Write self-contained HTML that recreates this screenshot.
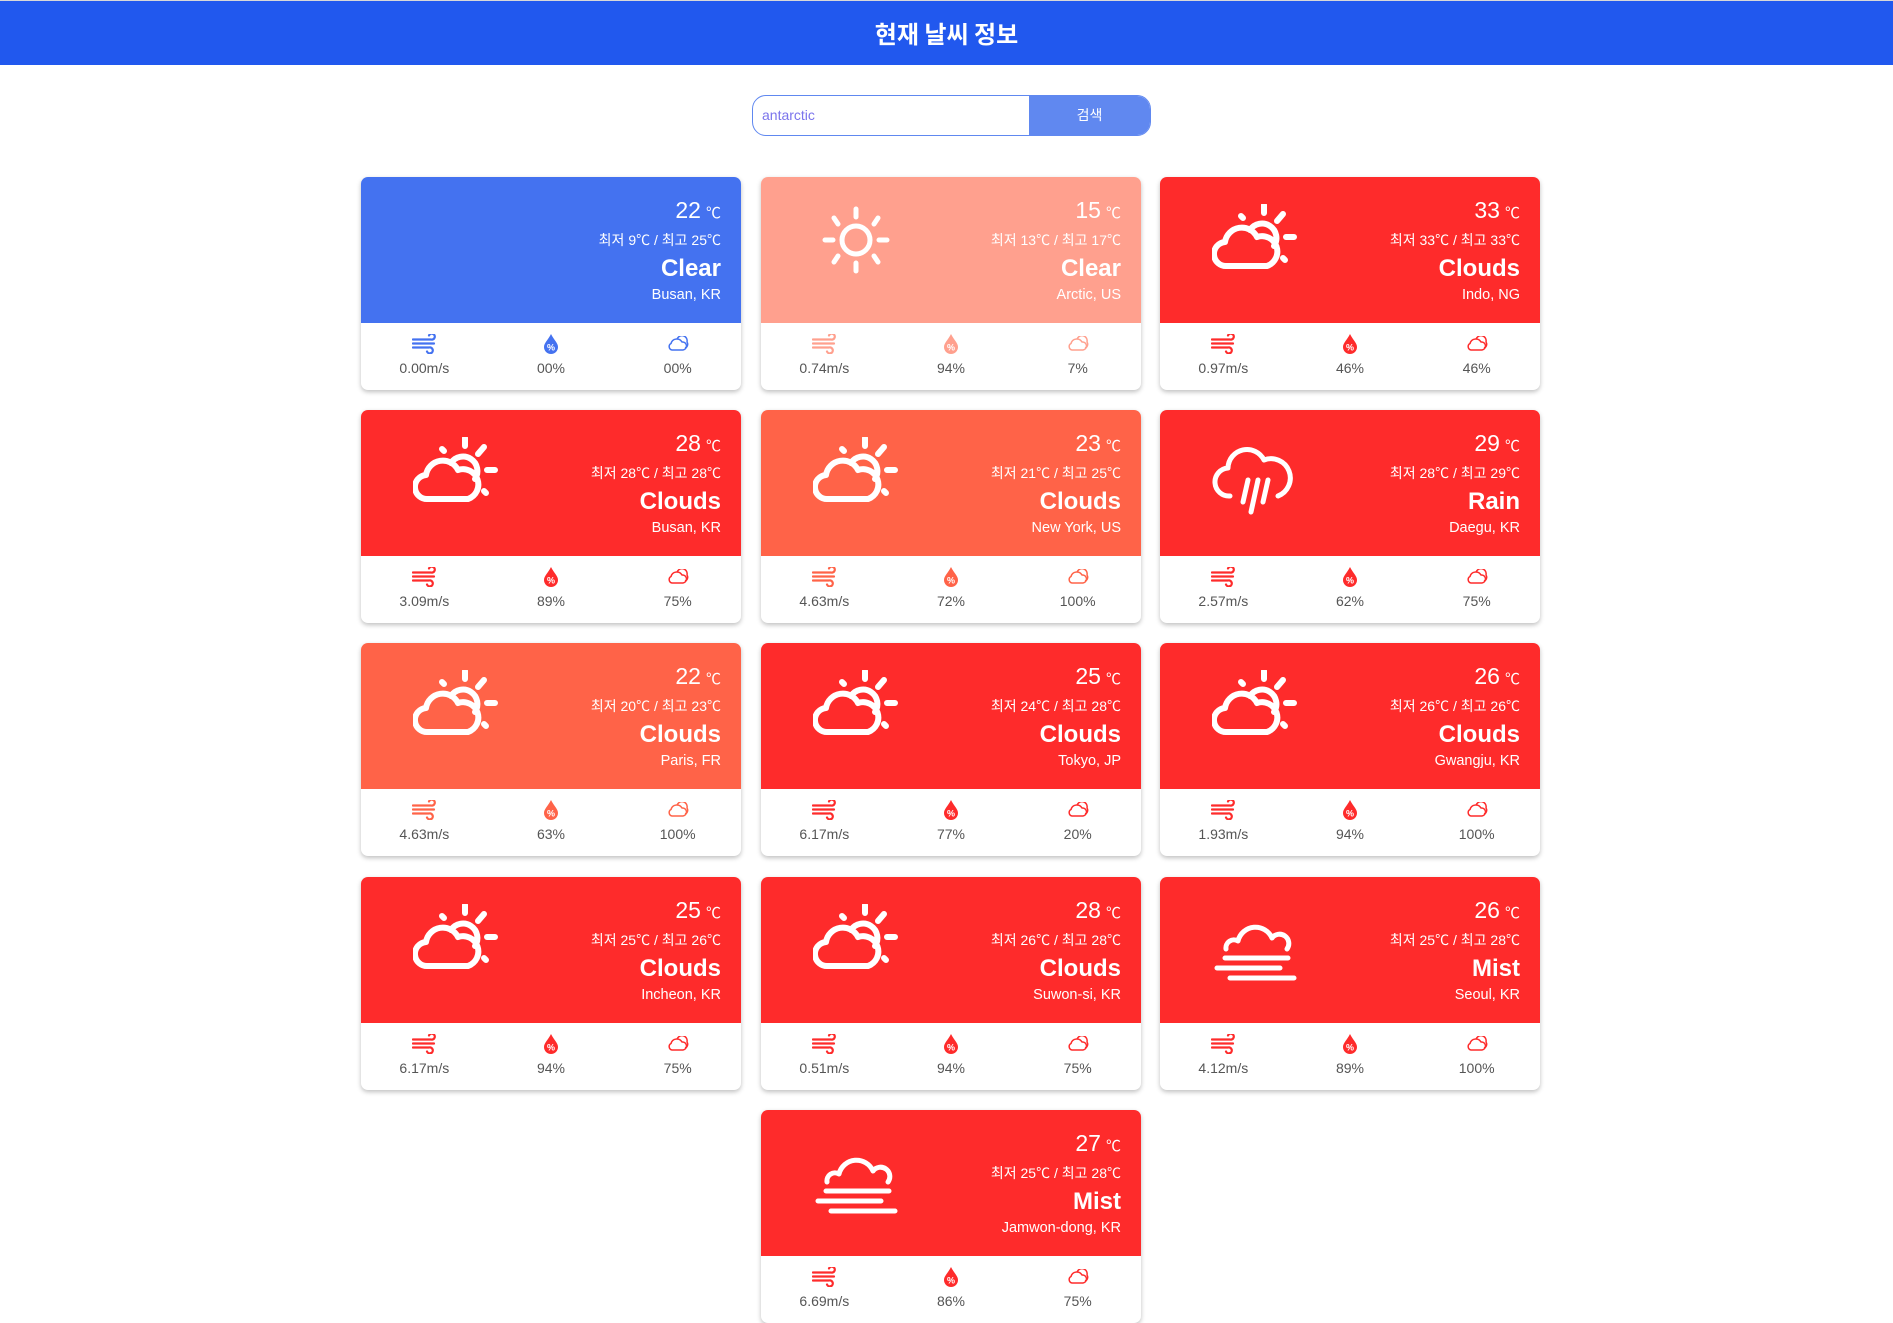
<!DOCTYPE html>
<html><head><meta charset="utf-8">
<style>
*{margin:0;padding:0;box-sizing:border-box}
body{width:1893px;height:1317px;overflow:hidden;background:#fff;font-family:"Liberation Sans","Noto Sans CJK KR",sans-serif;position:relative}
.hdr{position:absolute;left:0;top:1px;width:1893px;height:64px;background:#2158ee;color:#fff;text-align:center;font-size:24px;font-weight:bold;line-height:64px;font-family:"Noto Sans CJK KR",sans-serif}
.top{position:absolute;left:0;top:0;width:1893px;height:1px;background:#d8d8d8}
.search{position:absolute;left:752px;top:95px;width:399px;height:41px;border:1.5px solid #6088f0;border-radius:14px;overflow:hidden;display:flex}
.search .in{flex:1;font-size:14px;color:#7b74ec;padding-left:9px;line-height:38px}
.search .bt{width:121px;background:#6088f0;color:#fff;font-size:14px;text-align:center;line-height:38px;font-family:"Noto Sans CJK KR",sans-serif}
.card{position:absolute;width:380px;height:213px;border-radius:7px;overflow:hidden;background:#fff;box-shadow:0 2px 5px rgba(0,0,0,.25)}
.card .t{position:absolute;left:0;top:0;width:380px;height:146px;color:#fff}
.ic{position:absolute;left:52px;top:20px;width:86px;height:86px}
.tx{position:absolute;right:20px;top:0;width:300px;height:146px;text-align:right;white-space:nowrap}
.tx>div{position:absolute;right:0}
.tmp{top:22px;font-size:23px;line-height:23px}
.tmp small{font-size:15px;margin-left:5px}
.mm{top:56px;font-size:14px;line-height:14px}
.st{top:80px;font-size:24px;font-weight:bold;line-height:24px}
.loc{top:111px;font-size:14.5px;line-height:15px}
.b{position:absolute;left:0;top:146px;width:380px;height:67px;display:flex}
.b div{flex:1;text-align:center;color:#555;font-size:14px}
.b svg{display:block;margin:11px auto 6px;height:20px}
.blue .t{background:#4472f0}.salm .t{background:#ffa08e}.red .t{background:#fe2b2b}.tom .t{background:#ff6348}
</style></head><body>
<div class="top"></div>
<div class="hdr">현재 날씨 정보</div>
<div class="search"><div class="in">antarctic</div><div class="bt">검색</div></div>

<svg width="0" height="0" style="position:absolute">
<defs>
<g id="cs" fill="none" stroke="#fff" stroke-width="6" stroke-linecap="round" stroke-linejoin="round">
<path d="M15,62 A12,12 0 0 1 13,38 A17,17 0 0 1 45,33 A13,13 0 0 1 55,62 Z"/>
<path d="M38,26 A14,14 0 0 1 62,42"/>
<path d="M52,1 V9 M29,12 L31,14 M71,10 L65,17 M74,33 H82 M71,54 L73,56"/>
</g>
<g id="sun" fill="none" stroke="#fff" stroke-width="5" stroke-linecap="round">
<circle cx="43" cy="43" r="14"/>
<path d="M43,12 V20 M43,66 V74 M12,43 H20 M66,43 H74 M21,21 L25,27 M65,21 L61,27 M21,65 L25,59 M65,65 L61,59"/>
</g>
<g id="rain" fill="none" stroke="#fff" stroke-width="5" stroke-linecap="round" stroke-linejoin="round">
<path d="M18,66 A12,12 0 0 1 16,38 A19,19 0 0 1 52,30 A15,15 0 0 1 66,66"/>
<path d="M36,50 L31,72 M46,50 L39,82 M56,50 L51,72"/>
</g>
<g id="mist" fill="none" stroke="#fff" stroke-width="5" stroke-linecap="round" stroke-linejoin="round">
<path d="M14,52 A8,8 0 0 1 26,44 A18,18 0 0 1 60,41 A9,9 0 0 1 75,52"/>
<path d="M13,61 H76 M5,71 H68 M18,81 H82"/>
</g>
<g id="wind" fill="none" stroke-width="2.2" stroke-linecap="round"><path d="M1,5 H19 A3,3 0 1 0 17,1 M1,9 H22 M1,13 H17 A3,3 0 1 1 15,17"/></g>
<g id="drop"><path d="M7,0 C10,6 14,9 14,13 A7,7 0 0 1 0,13 C0,9 4,6 7,0Z"/><text x="7" y="16.5" font-size="9" fill="#fff" text-anchor="middle" font-family="Liberation Sans" font-weight="bold">%</text></g>
<g id="cld" fill="none" stroke-width="1.5" stroke-linejoin="round"><path d="M5,14 A3.5,3.5 0 0 1 4,7.5 A6,6 0 0 1 15,6 A4,4 0 0 1 16,14 Z"/><path d="M10,3.5 A5,5 0 0 1 20,6 A4,4 0 0 1 18,12"/></g>
</defs></svg>

<div class="card blue" style="left:361px;top:177px"><div class="t"><div class="tx"><div class="tmp">22<small>℃</small></div><div class="mm">최저 9℃ / 최고 25℃</div><div class="st">Clear</div><div class="loc">Busan, KR</div></div></div>
<div class="b"><div><svg viewBox="0 0 24 19" width="24" style="stroke:#4472f0"><use href="#wind"/></svg>0.00m/s</div><div><svg viewBox="0 0 14 20" width="14" style="fill:#4472f0"><use href="#drop"/></svg>00%</div><div><svg viewBox="0 0 22 16" width="22" style="stroke:#4472f0;margin-top:13px;height:16px;margin-bottom:8px"><use href="#cld"/></svg>00%</div></div></div>

<div class="card salm" style="left:761px;top:177px"><div class="t"><svg class="ic" viewBox="0 0 86 86"><use href="#sun"/></svg><div class="tx"><div class="tmp">15<small>℃</small></div><div class="mm">최저 13℃ / 최고 17℃</div><div class="st">Clear</div><div class="loc">Arctic, US</div></div></div>
<div class="b"><div><svg viewBox="0 0 24 19" width="24" style="stroke:#ffa08e"><use href="#wind"/></svg>0.74m/s</div><div><svg viewBox="0 0 14 20" width="14" style="fill:#ffa08e"><use href="#drop"/></svg>94%</div><div><svg viewBox="0 0 22 16" width="22" style="stroke:#ffa08e;margin-top:13px;height:16px;margin-bottom:8px"><use href="#cld"/></svg>7%</div></div></div>

<div class="card red" style="left:1160px;top:177px"><div class="t"><svg class="ic" viewBox="0 0 86 86" style="top:27px"><use href="#cs"/></svg><div class="tx"><div class="tmp">33<small>℃</small></div><div class="mm">최저 33℃ / 최고 33℃</div><div class="st">Clouds</div><div class="loc">Indo, NG</div></div></div>
<div class="b"><div><svg viewBox="0 0 24 19" width="24" style="stroke:#fe2b2b"><use href="#wind"/></svg>0.97m/s</div><div><svg viewBox="0 0 14 20" width="14" style="fill:#fe2b2b"><use href="#drop"/></svg>46%</div><div><svg viewBox="0 0 22 16" width="22" style="stroke:#fe2b2b;margin-top:13px;height:16px;margin-bottom:8px"><use href="#cld"/></svg>46%</div></div></div>

<div class="card red" style="left:361px;top:410px"><div class="t"><svg class="ic" viewBox="0 0 86 86" style="top:27px"><use href="#cs"/></svg><div class="tx"><div class="tmp">28<small>℃</small></div><div class="mm">최저 28℃ / 최고 28℃</div><div class="st">Clouds</div><div class="loc">Busan, KR</div></div></div>
<div class="b"><div><svg viewBox="0 0 24 19" width="24" style="stroke:#fe2b2b"><use href="#wind"/></svg>3.09m/s</div><div><svg viewBox="0 0 14 20" width="14" style="fill:#fe2b2b"><use href="#drop"/></svg>89%</div><div><svg viewBox="0 0 22 16" width="22" style="stroke:#fe2b2b;margin-top:13px;height:16px;margin-bottom:8px"><use href="#cld"/></svg>75%</div></div></div>

<div class="card tom" style="left:761px;top:410px"><div class="t"><svg class="ic" viewBox="0 0 86 86" style="top:27px"><use href="#cs"/></svg><div class="tx"><div class="tmp">23<small>℃</small></div><div class="mm">최저 21℃ / 최고 25℃</div><div class="st">Clouds</div><div class="loc">New York, US</div></div></div>
<div class="b"><div><svg viewBox="0 0 24 19" width="24" style="stroke:#ff6348"><use href="#wind"/></svg>4.63m/s</div><div><svg viewBox="0 0 14 20" width="14" style="fill:#ff6348"><use href="#drop"/></svg>72%</div><div><svg viewBox="0 0 22 16" width="22" style="stroke:#ff6348;margin-top:13px;height:16px;margin-bottom:8px"><use href="#cld"/></svg>100%</div></div></div>

<div class="card red" style="left:1160px;top:410px"><div class="t"><svg class="ic" viewBox="0 0 86 86"><use href="#rain"/></svg><div class="tx"><div class="tmp">29<small>℃</small></div><div class="mm">최저 28℃ / 최고 29℃</div><div class="st">Rain</div><div class="loc">Daegu, KR</div></div></div>
<div class="b"><div><svg viewBox="0 0 24 19" width="24" style="stroke:#fe2b2b"><use href="#wind"/></svg>2.57m/s</div><div><svg viewBox="0 0 14 20" width="14" style="fill:#fe2b2b"><use href="#drop"/></svg>62%</div><div><svg viewBox="0 0 22 16" width="22" style="stroke:#fe2b2b;margin-top:13px;height:16px;margin-bottom:8px"><use href="#cld"/></svg>75%</div></div></div>

<div class="card tom" style="left:361px;top:643px"><div class="t"><svg class="ic" viewBox="0 0 86 86" style="top:27px"><use href="#cs"/></svg><div class="tx"><div class="tmp">22<small>℃</small></div><div class="mm">최저 20℃ / 최고 23℃</div><div class="st">Clouds</div><div class="loc">Paris, FR</div></div></div>
<div class="b"><div><svg viewBox="0 0 24 19" width="24" style="stroke:#ff6348"><use href="#wind"/></svg>4.63m/s</div><div><svg viewBox="0 0 14 20" width="14" style="fill:#ff6348"><use href="#drop"/></svg>63%</div><div><svg viewBox="0 0 22 16" width="22" style="stroke:#ff6348;margin-top:13px;height:16px;margin-bottom:8px"><use href="#cld"/></svg>100%</div></div></div>

<div class="card red" style="left:761px;top:643px"><div class="t"><svg class="ic" viewBox="0 0 86 86" style="top:27px"><use href="#cs"/></svg><div class="tx"><div class="tmp">25<small>℃</small></div><div class="mm">최저 24℃ / 최고 28℃</div><div class="st">Clouds</div><div class="loc">Tokyo, JP</div></div></div>
<div class="b"><div><svg viewBox="0 0 24 19" width="24" style="stroke:#fe2b2b"><use href="#wind"/></svg>6.17m/s</div><div><svg viewBox="0 0 14 20" width="14" style="fill:#fe2b2b"><use href="#drop"/></svg>77%</div><div><svg viewBox="0 0 22 16" width="22" style="stroke:#fe2b2b;margin-top:13px;height:16px;margin-bottom:8px"><use href="#cld"/></svg>20%</div></div></div>

<div class="card red" style="left:1160px;top:643px"><div class="t"><svg class="ic" viewBox="0 0 86 86" style="top:27px"><use href="#cs"/></svg><div class="tx"><div class="tmp">26<small>℃</small></div><div class="mm">최저 26℃ / 최고 26℃</div><div class="st">Clouds</div><div class="loc">Gwangju, KR</div></div></div>
<div class="b"><div><svg viewBox="0 0 24 19" width="24" style="stroke:#fe2b2b"><use href="#wind"/></svg>1.93m/s</div><div><svg viewBox="0 0 14 20" width="14" style="fill:#fe2b2b"><use href="#drop"/></svg>94%</div><div><svg viewBox="0 0 22 16" width="22" style="stroke:#fe2b2b;margin-top:13px;height:16px;margin-bottom:8px"><use href="#cld"/></svg>100%</div></div></div>

<div class="card red" style="left:361px;top:877px"><div class="t"><svg class="ic" viewBox="0 0 86 86" style="top:27px"><use href="#cs"/></svg><div class="tx"><div class="tmp">25<small>℃</small></div><div class="mm">최저 25℃ / 최고 26℃</div><div class="st">Clouds</div><div class="loc">Incheon, KR</div></div></div>
<div class="b"><div><svg viewBox="0 0 24 19" width="24" style="stroke:#fe2b2b"><use href="#wind"/></svg>6.17m/s</div><div><svg viewBox="0 0 14 20" width="14" style="fill:#fe2b2b"><use href="#drop"/></svg>94%</div><div><svg viewBox="0 0 22 16" width="22" style="stroke:#fe2b2b;margin-top:13px;height:16px;margin-bottom:8px"><use href="#cld"/></svg>75%</div></div></div>

<div class="card red" style="left:761px;top:877px"><div class="t"><svg class="ic" viewBox="0 0 86 86" style="top:27px"><use href="#cs"/></svg><div class="tx"><div class="tmp">28<small>℃</small></div><div class="mm">최저 26℃ / 최고 28℃</div><div class="st">Clouds</div><div class="loc">Suwon-si, KR</div></div></div>
<div class="b"><div><svg viewBox="0 0 24 19" width="24" style="stroke:#fe2b2b"><use href="#wind"/></svg>0.51m/s</div><div><svg viewBox="0 0 14 20" width="14" style="fill:#fe2b2b"><use href="#drop"/></svg>94%</div><div><svg viewBox="0 0 22 16" width="22" style="stroke:#fe2b2b;margin-top:13px;height:16px;margin-bottom:8px"><use href="#cld"/></svg>75%</div></div></div>

<div class="card red" style="left:1160px;top:877px"><div class="t"><svg class="ic" viewBox="0 0 86 86"><use href="#mist"/></svg><div class="tx"><div class="tmp">26<small>℃</small></div><div class="mm">최저 25℃ / 최고 28℃</div><div class="st">Mist</div><div class="loc">Seoul, KR</div></div></div>
<div class="b"><div><svg viewBox="0 0 24 19" width="24" style="stroke:#fe2b2b"><use href="#wind"/></svg>4.12m/s</div><div><svg viewBox="0 0 14 20" width="14" style="fill:#fe2b2b"><use href="#drop"/></svg>89%</div><div><svg viewBox="0 0 22 16" width="22" style="stroke:#fe2b2b;margin-top:13px;height:16px;margin-bottom:8px"><use href="#cld"/></svg>100%</div></div></div>

<div class="card red" style="left:761px;top:1110px"><div class="t"><svg class="ic" viewBox="0 0 86 86"><use href="#mist"/></svg><div class="tx"><div class="tmp">27<small>℃</small></div><div class="mm">최저 25℃ / 최고 28℃</div><div class="st">Mist</div><div class="loc">Jamwon-dong, KR</div></div></div>
<div class="b"><div><svg viewBox="0 0 24 19" width="24" style="stroke:#fe2b2b"><use href="#wind"/></svg>6.69m/s</div><div><svg viewBox="0 0 14 20" width="14" style="fill:#fe2b2b"><use href="#drop"/></svg>86%</div><div><svg viewBox="0 0 22 16" width="22" style="stroke:#fe2b2b;margin-top:13px;height:16px;margin-bottom:8px"><use href="#cld"/></svg>75%</div></div></div>

</body></html>
